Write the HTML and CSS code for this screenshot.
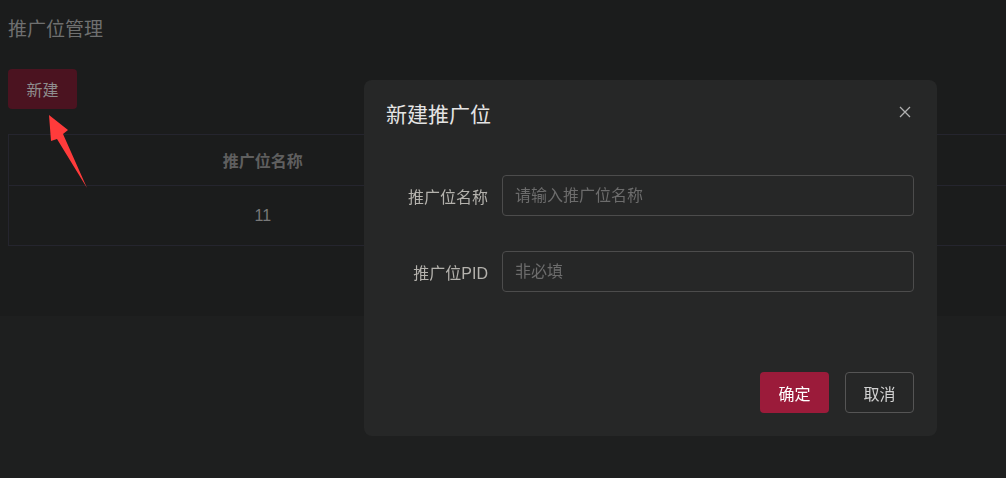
FILE: index.html
```html
<!DOCTYPE html>
<html lang="zh-CN">
<head>
	<meta charset="UTF-8">
	<title>推广位管理</title>
	<link rel="stylesheet" href="styles.css">
</head>
<body>
	<div class="page">
		<h2 class="page-title">推广位管理</h2>
		<button class="btn-new">新建</button>
		<table class="grid">
			<thead>
				<tr><th class="col-name">推广位名称</th><th></th></tr>
			</thead>
			<tbody>
				<tr><td class="col-name">11</td><td></td></tr>
			</tbody>
		</table>
	</div>

	<!-- 标注箭头 -->
	<svg class="arrow" width="60" height="90" viewBox="40 105 60 90">
		<polygon points="49,115 68,130 63,134 87,188 57,139 51,141" fill="#ff3b3b"/>
	</svg>

	<div class="mask">
		<div class="dialog">
			<div class="dialog-head">
				<span class="dialog-title">新建推广位</span>
				<svg class="dialog-close" width="12" height="12" viewBox="0 0 12 12">
					<path d="M1 1L11 11M11 1L1 11" stroke="#b0b0b0" stroke-width="1.3" fill="none"/>
				</svg>
			</div>
			<div class="dialog-body">
				<div class="form-row">
					<label class="form-label">推广位名称</label>
					<div class="form-input">请输入推广位名称</div>
				</div>
				<div class="form-row">
					<label class="form-label">推广位PID</label>
					<div class="form-input">非必填</div>
				</div>
			</div>
			<div class="dialog-foot">
				<button class="btn btn-primary">确定</button>
				<button class="btn btn-plain">取消</button>
			</div>
		</div>
	</div>
</body>
</html>
```

FILE: styles.css
```css
*{
	padding:0;
	margin:0;
	box-sizing:border-box;
}
body{
	background:#1e1f1f;
	font-family:"Liberation Sans","Noto Sans CJK SC",sans-serif;
	overflow:hidden;
	height:478px;
}
.page{
	background:#1b1c1c;
	height:316px;
	padding:8px 0 0 8px;
	overflow:hidden;
}
.page-title{
	margin-top:12px;
	font-size:19px;
	line-height:20px;
	font-weight:normal;
	color:#6f7070;
}
.btn-new{
	display:block;
	margin-top:29px;
	width:69px;
	height:40px;
	border:none;
	border-radius:4px;
	background:#4b1320;
	color:#8e8e8e;
	font-family:inherit;
	font-size:16px;
}
.grid{
	margin-top:25px;
	width:1100px;
	border-collapse:collapse;
	border:1px solid #25252e;
}
.grid th{
	height:51px;
	font-size:16px;
	font-weight:bold;
	color:#5f5f5f;
	border-bottom:1px solid #25252e;
}
.grid td{
	height:60px;
	font-size:16px;
	color:#787878;
	text-align:center;
}
.grid .col-name{
	width:508px;
}
.arrow{
	position:absolute;
	left:40px;
	top:105px;
}
.mask{
	position:fixed;
	inset:0;
	padding:80px 0 0 364px;
}
.dialog{
	width:573px;
	height:356px;
	background:#262727;
	border-radius:8px;
	display:flex;
	flex-direction:column;
}
.dialog-head{
	display:flex;
	justify-content:space-between;
	align-items:center;
	padding:20px 26px 10px 22px;
}
.dialog-title{
	font-size:21px;
	line-height:30px;
	color:#e4e4e4;
}
.dialog-close{
	margin-top:-6px;
}
.dialog-body{
	padding:35px 23px 0 20px;
}
.form-row{
	display:flex;
	align-items:center;
	margin-bottom:35px;
}
.form-label{
	width:118px;
	padding-right:14px;
	text-align:right;
	font-size:16px;
	color:#b4b2ad;
}
.form-input{
	flex:1;
	height:41px;
	line-height:39px;
	border:1px solid #4c4c4c;
	border-radius:4px;
	padding-left:12px;
	font-size:16px;
	color:#6c6c6c;
}
.dialog-foot{
	margin-top:auto;
	display:flex;
	justify-content:flex-end;
	gap:16px;
	padding:0 23px 23px 0;
}
.btn{
	width:69px;
	height:41px;
	border-radius:4px;
	font-family:inherit;
	font-size:16px;
}
.btn-primary{
	background:#9b1b3a;
	border:none;
	color:#fff;
}
.btn-plain{
	background:transparent;
	border:1px solid #555;
	color:#d2d2d2;
}
```
